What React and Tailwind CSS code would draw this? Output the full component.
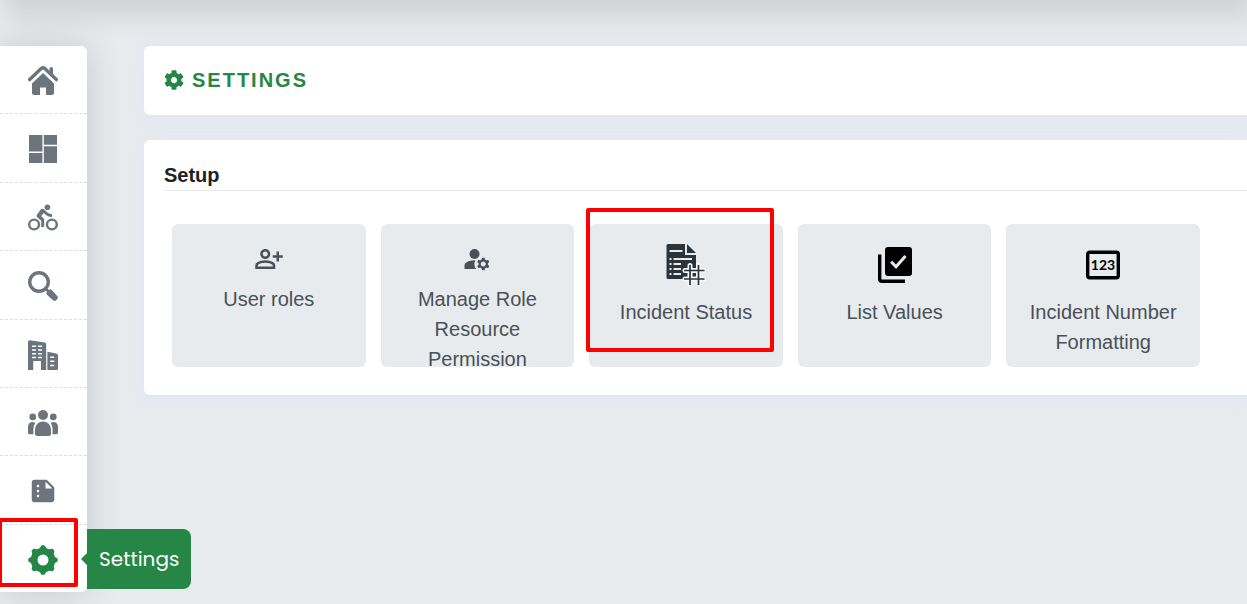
import React from "react";
import { MdSummarize, MdOutlinePersonAddAlt, MdManageAccounts } from "react-icons/md";
import { FaCog } from "react-icons/fa";

const HomeIcon = () => (
  <svg viewBox="0 0 30 30" className="size-[30px]" fill="currentColor">
    <path
      d="M1.7 13.600 13.200 2.600a2.600 2.600 0 0 1 3.600 0L28.300 13.600"
      fill="none"
      stroke="currentColor"
      strokeWidth="3.400"
      strokeLinecap="round"
    />
    <path d="M21.500 2.800a1.700 1.700 0 0 1 3.500 0v8l-3.500-3.300z" />
    <path d="M15 7 26 17.400V26.500a2.500 2.500 0 0 1-2.500 2.500H18v-7.500h-6V29H6.500A2.500 2.500 0 0 1 4 26.500v-9.100z" />
  </svg>
);

const DashboardIcon = () => (
  <svg viewBox="0 0 30 30" className="size-[30px]" fill="currentColor">
    <path d="M1 0h13.400v16.500H1zM15.800 0H29v9.700H15.800zM1 18h13.400v10H1zM15.800 11.300H29V28H15.800z" />
  </svg>
);

const BikeIcon = () => (
  <svg viewBox="0 0 30 30" className="size-[30px]" fill="currentColor">
    <circle cx="19.400" cy="4.200" r="2.800" />
    <g fill="none" stroke="currentColor" strokeWidth="2.400">
      <circle cx="6.100" cy="21.500" r="4.900" />
      <circle cx="23.900" cy="21.500" r="4.900" />
    </g>
    <path d="M12.900 6.300c1-.8 2.500-.7 3.400.2l2.600 2.600c1.300 1.300 3 2.100 5.200 2.100v2.800c-3 0-5.400-1.100-7.300-3l-.9-.9-2.800 2.900 3.100 3.100V24h-3v-6.200l-3.800-3.300c-1-.9-1-2.400 0-3.400z" />
  </svg>
);

const SearchIcon = () => (
  <svg viewBox="0 0 30 30" className="size-[30px]">
    <circle cx="11" cy="11" r="9.300" fill="none" stroke="currentColor" strokeWidth="3.400" />
    <path d="M17.500 17.500 21 21" stroke="currentColor" strokeWidth="2.600" />
    <path d="M20.300 20.300 25.500 25.500" stroke="currentColor" strokeWidth="6.200" />
    <path d="M22 22 26.600 26.600" stroke="currentColor" strokeWidth="6.200" strokeLinecap="round" />
  </svg>
);

const BuildingIcon = () => (
  <svg viewBox="0 0 30 30" className="size-[30px]">
    <path
      fill="currentColor"
      d="M0 1.800A1.600 1.600 0 0 1 1.800.2L16.600 2.600A1.800 1.800 0 0 1 18.200 4.400V30H13v-9H5.200v9H0zM19.400 11.800l9 1.700A2 2 0 0 1 30 15.400V28.500a1.500 1.500 0 0 1-1.500 1.500h-9.100z"
    />
    <path
      stroke="#fff"
      strokeWidth="1.500"
      fill="none"
      d="M4 6.200h4M10 6.200h4M4 10h4M10 10h4M4 13.800h4M10 13.800h4M4 17.500h4M10 17.500h4M22.200 17.200h4M22.200 21.300h4M22.200 25.400h4"
    />
  </svg>
);

const UsersIcon = () => (
  <svg viewBox="0 0 30 30" className="size-[30px]" fill="currentColor">
    <circle cx="15" cy="7" r="5" />
    <circle cx="4.700" cy="8.900" r="3.300" />
    <circle cx="25.300" cy="8.900" r="3.300" />
    <path d="M7 21.500a8 8 0 0 1 16 0v4a2.500 2.500 0 0 1-2.500 2.500h-11A2.500 2.500 0 0 1 7 25.500z" />
    <path d="M7.200 15.200A9.500 9.500 0 0 0 5.400 21v5.300H1.900A1.900 1.900 0 0 1 0 24.400v-5.900A4.500 4.500 0 0 1 4.500 14c1 0 2 .4 2.700 1.200zM22.800 15.200A9.500 9.500 0 0 1 24.600 21v5.300h3.500a1.900 1.900 0 0 0 1.900-1.900v-5.900a4.500 4.500 0 0 0-4.500-4.500c-1 0-2 .4-2.700 1.200z" />
  </svg>
);

const GearIcon = () => (
  <svg viewBox="0 0 30 30" className="size-[30px]">
    <circle cx="15" cy="15" r="8.900" fill="none" stroke="currentColor" strokeWidth="6.800" />
    <g fill="currentColor" stroke="currentColor" strokeWidth="2" strokeLinejoin="round">
      {[0, 45, 90, 135, 180, 225, 270, 315].map((angle) => (
        <path key={angle} d="M12 4.800 14 1.300h2L18 4.800z" transform={`rotate(${angle} 15 15)`} />
      ))}
    </g>
  </svg>
);

const IncidentStatusIcon = () => (
  <svg viewBox="0 0 40 44" className="h-11 w-10">
    <path fill="#2b343b" d="M2 1h17v11h11v24H2a1.500 1.500 0 0 1-1.500-1.500v-32A1.500 1.500 0 0 1 2 1zM21 1l9 9h-9z" />
    <path
      stroke="#e8ebee"
      strokeWidth="2.200"
      d="M3.500 8H16.500M3.500 16H5.500M7.500 16H26M3.500 21H5.500M7.500 21H15M3.500 26H5.500M7.500 26H15M3.500 31H5.500M7.500 31H15"
    />
    <path
      stroke="#f6f7f8"
      strokeWidth="5"
      strokeLinecap="round"
      d="M24 22.500V41M32.500 22.500V41M19 27.500H37.500M19 36H37.500"
    />
    <path
      stroke="#2b343b"
      strokeWidth="1.700"
      d="M24 22V42M32.500 22V42M18 27.500H38.500M18 36H38.500"
    />
  </svg>
);

const ListValuesIcon = () => (
  <svg viewBox="0 0 34 36" className="h-9 w-[34px]">
    <rect x="7" y="0" width="27" height="29" rx="3" fill="#000" />
    <path d="M1.700 7.500V32a2.300 2.300 0 0 0 2.300 2.300H27" fill="none" stroke="#000" strokeWidth="3.400" />
    <path d="m13.200 14.800 4.800 5L27.500 9" fill="none" stroke="#e8ebee" strokeWidth="3" />
  </svg>
);

const NumberIcon = () => (
  <svg viewBox="0 0 34 30" className="h-[30px] w-[34px]">
    <rect x="1.700" y="2.200" width="30.600" height="25.600" rx="2" fill="none" stroke="#000" strokeWidth="3.400" />
    <text
      x="17"
      y="20"
      textAnchor="middle"
      className="font-['Lato',sans-serif] text-[14px] font-bold"
    >
      123
    </text>
  </svg>
);

const navItems = [
  { label: "Home", icon: <HomeIcon /> },
  { label: "Dashboard", icon: <DashboardIcon /> },
  { label: "Activities", icon: <BikeIcon /> },
  { label: "Search", icon: <SearchIcon /> },
  { label: "Buildings", icon: <BuildingIcon /> },
  { label: "Users", icon: <UsersIcon /> },
  { label: "Reports", icon: <MdSummarize className="size-[30px]" /> },
  { label: "Settings", icon: <GearIcon />, active: true },
];

const tiles = [
  { label: "User roles", icon: <MdOutlinePersonAddAlt className="size-[30px]" />, small: true },
  {
    label: "Manage Role Resource Permission",
    icon: <MdManageAccounts className="size-[30px]" />,
    small: true,
  },
  { label: "Incident Status", icon: <IncidentStatusIcon />, highlighted: true },
  { label: "List Values", icon: <ListValuesIcon /> },
  { label: "Incident Number Formatting", icon: <NumberIcon /> },
];

const Sidebar = () => (
  <nav className="z-10 flex h-[546px] w-[87px] shrink-0 flex-col rounded-r-md bg-white text-[#6c757d] shadow-[0_0_36px_rgba(0,0,0,0.15)]">
    {navItems.map((item) => (
      <div
        key={item.label}
        className="relative flex flex-1 border-b border-dashed border-[#dcdfe1] last:border-b-0"
      >
        <a
          href="#"
          aria-label={item.label}
          className={`flex flex-1 items-center justify-center pt-[3px] pr-0.5 ${item.active ? "text-[#258645]" : ""}`}
        >
          {item.icon}
        </a>
        {item.active && (
          <>
            <div className="absolute top-1 left-full flex h-[60px] items-center rounded-r-lg bg-[#258645] px-3 font-['Poppins','Inter',sans-serif] text-[20px] text-white">
              <span className="absolute top-6 -left-1.5 border-y-6 border-r-6 border-y-transparent border-r-[#258645]" />
              Settings
            </div>
            <div className="pointer-events-none absolute -top-[7px] -left-0.5 h-[69px] w-20 rounded-xs border-4 border-[#ff0000]" />
          </>
        )}
      </div>
    ))}
  </nav>
);

const Tile = ({ label, icon, small, highlighted }) => (
  <li className="relative">
    <button
      type="button"
      className="flex h-[143px] w-full cursor-pointer flex-col items-center overflow-hidden rounded-md bg-[#e8ebee] px-5 pt-[15px] text-[20px] leading-[30px] text-[#495057]"
    >
      <span
        className={`flex shrink-0 items-center justify-center ${
          small ? "mb-[5px] h-10" : "mb-1.5 h-[52px]"
        }`}
      >
        {icon}
      </span>
      <span>{label}</span>
    </button>
    {highlighted && (
      <div className="pointer-events-none absolute -top-4 -left-[3px] h-36 w-[188px] rounded-xs border-4 border-[#ff0000]" />
    )}
  </li>
);

const App = () => {
  return (
    <div className="min-h-screen overflow-hidden bg-[#e7ebee] font-['Liberation_Sans',Arial,sans-serif]">
      <header className="-mt-16 h-16 shadow-[6px_18px_25px_rgba(0,0,0,0.1)]" />
      <div className="flex items-start pt-[46px]">
        <Sidebar />
        <main className="ml-[57px] flex min-w-0 flex-1 flex-col gap-[25px]">
          <section className="flex h-[69px] items-center rounded-l-md bg-white px-5 pb-0.5 shadow-[0_4px_15px_rgba(226,229,246,0.8)]">
            <h1 className="flex items-center gap-2 text-[20px] leading-[30px] font-bold tracking-[2px] text-[#258645]">
              <FaCog className="size-5" />
              SETTINGS
            </h1>
          </section>
          <section className="rounded-l-md bg-white pt-5 pb-7 pl-5 shadow-[0_4px_15px_rgba(226,229,246,0.8)]">
            <h2 className="border-b border-[#e6e8ea] text-[20px] leading-[30px] font-bold text-[#212121]">
              Setup
            </h2>
            <ul className="mt-[33px] mr-[47px] ml-2 grid grid-cols-5 gap-[15px]">
              {tiles.map((tile) => (
                <Tile key={tile.label} {...tile} />
              ))}
            </ul>
          </section>
        </main>
      </div>
    </div>
  );
};

export default App;
